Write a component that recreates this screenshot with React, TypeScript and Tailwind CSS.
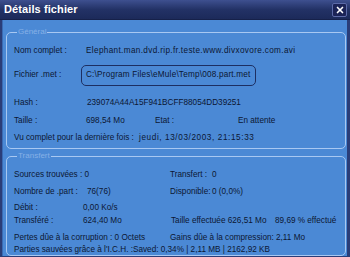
import { X } from "lucide-react"

const font = { fontFamily: '"Liberation Sans", Arial, sans-serif' }

function Row({ className = "", children }: { className?: string; children: React.ReactNode }) {
    return <div className={`flex items-center whitespace-nowrap ${className}`}>{children}</div>
}

export default function App() {
    return (
        <div style={font} className="w-[350px] h-[257px] flex flex-col bg-[#2a3d78] overflow-hidden">
            {/* title bar */}
            <div className="h-[20px] shrink-0 flex items-center justify-between pl-[4px] pr-[3px] bg-gradient-to-b from-[#3e5090] via-[#233266] to-[#1c2a5a] border-b border-[#16214a]">
                <span className="text-white font-bold text-[11px] tracking-[0.1px]">Détails fichier</span>
                <div className="w-[15px] h-[14px] flex items-center justify-center bg-[#1b2356] border border-[#5c6aa8] rounded-[2px]">
                    <X className="w-[10px] h-[10px] text-white" strokeWidth={4} />
                </div>
            </div>

            {/* body */}
            <div className="flex-1 ml-[2px] mr-[3px] mb-[2px] bg-[#4b89d5] border-l border-[#3a6ab2] pl-[3px] pr-[1px] pt-[7px] text-[8.2px] text-[#0b1733]">
                <fieldset className="border border-[#a8c8f2] rounded-[5px] px-[7px] pb-[3px]">
                    <legend className="ml-[3px] px-[1px] text-[8px] leading-[10px] text-[#86b0e6]">Général</legend>
                    <Row className="h-[14px] mt-[7px]">
                        <span className="w-[72px]">Nom complet :</span>
                        <span className="tracking-[0.35px]">Elephant.man.dvd.rip.fr.teste.www.divxovore.com.avi</span>
                    </Row>
                    <Row className="h-[21px] mt-[7px]">
                        <span className="w-[67px]">Fichier .met :</span>
                        <div className="h-[21px] w-[175px] flex items-center pl-[4px] border-[1.5px] border-[#1d2f62] rounded-[5px] tracking-[0.2px]">
                            C:\Program Files\eMule\Temp\008.part.met
                        </div>
                    </Row>
                    <Row className="h-[14px] mt-[10px]">
                        <span className="w-[73px]">Hash :</span>
                        <span>239074A44A15F941BCFF88054DD39251</span>
                    </Row>
                    <Row className="h-[14px] mt-[4px]">
                        <span className="w-[72px]">Taille :</span>
                        <span className="w-[69px]">698,54 Mo</span>
                        <span className="w-[83px]">Etat :</span>
                        <span>En attente</span>
                    </Row>
                    <Row className="h-[14px] mt-[3px]">
                        <span className="w-[125px]">Vu complet pour la dernière fois :</span>
                        <span className="tracking-[0.6px]">jeudi, 13/03/2003, 21:15:33</span>
                    </Row>
                </fieldset>

                <fieldset className="mt-[2px] border border-[#a8c8f2] rounded-[5px] px-[7px]">
                    <legend className="ml-[3px] px-[1px] text-[8px] leading-[10px] text-[#86b0e6]">Transfert</legend>
                    <Row className="h-[12px] mt-[8px]">
                        <span className="w-[156px]">Sources trouvées : 0</span>
                        <span className="w-[42px]">Transfert :</span>
                        <span>0</span>
                    </Row>
                    <Row className="h-[12px] mt-[5px]">
                        <span className="w-[73px]">Nombre de .part :</span>
                        <span className="w-[83px]">76(76)</span>
                        <span className="w-[42px]">Disponible:</span>
                        <span>0 (0,0%)</span>
                    </Row>
                    <Row className="h-[12px] mt-[4px]">
                        <span className="w-[69px]">Débit :</span>
                        <span>0,00 Ko/s</span>
                    </Row>
                    <Row className="h-[12px] mt-[1px]">
                        <span className="w-[69px]">Transféré :</span>
                        <span className="w-[88px]">624,40 Mo</span>
                        <span className="w-[104px]">Taille effectuée 626,51 Mo</span>
                        <span>89,69 % effectué</span>
                    </Row>
                    <Row className="h-[11px] mt-[6px]">
                        <span className="w-[156px]">Pertes dûe à la corruption : 0 Octets</span>
                        <span>Gains dûe à la compression: 2,11 Mo</span>
                    </Row>
                    <Row className="h-[10px] mt-[1px]">
                        <span>Parties sauvées grâce à l'I.C.H. :Saved: 0,34% | 2,11 MB | 2162,92 KB</span>
                    </Row>
                </fieldset>
            </div>
        </div>
    )
}
